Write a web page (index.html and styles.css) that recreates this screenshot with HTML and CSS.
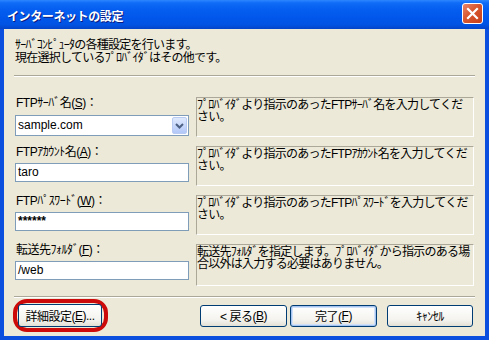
FILE: index.html
```html
<!DOCTYPE html>
<html lang="ja">
<head>
    <meta charset="UTF-8">
    <title>インターネットの設定</title>
    <link rel="stylesheet" href="styles.css">
</head>
<body>
    <div class="window">
        <!-- Title bar -->
        <div class="titlebar">
            <span class="title">インターネットの設定</span>
            <span class="close">
                <svg width="13" height="13" viewBox="0 0 13 13">
                    <path d="M2 2 L11 11 M11 2 L2 11" stroke="#fff" stroke-width="2.2" stroke-linecap="square"/>
                </svg>
            </span>
        </div>

        <div class="client">
            <p class="intro">ｻｰﾊﾞｺﾝﾋﾟｭｰﾀの各種設定を行います。<br>現在選択しているﾌﾟﾛﾊﾞｲﾀﾞはその他です。</p>
            <div class="sep"></div>

            <div class="fields">
                <div class="row">
                    <div class="field">
                        <div class="label">FTPｻｰﾊﾞ名(<u>S</u>)：</div>
                        <div class="combo">
                            <span class="value">sample.com</span>
                            <span class="drop">
                                <svg width="9" height="6" viewBox="0 0 9 6">
                                    <path d="M1 1 L4.5 4.5 L8 1" fill="none" stroke="#4d6185" stroke-width="2"/>
                                </svg>
                            </span>
                        </div>
                    </div>
                    <div class="desc">ﾌﾟﾛﾊﾞｲﾀﾞより指示のあったFTPｻｰﾊﾞ名を入力してください。</div>
                </div>

                <div class="row">
                    <div class="field">
                        <div class="label">FTPｱｶｳﾝﾄ名(<u>A</u>)：</div>
                        <div class="edit">taro</div>
                    </div>
                    <div class="desc">ﾌﾟﾛﾊﾞｲﾀﾞより指示のあったFTPｱｶｳﾝﾄ名を入力してください。</div>
                </div>

                <div class="row">
                    <div class="field">
                        <div class="label">FTPﾊﾟｽﾜｰﾄﾞ(<u>W</u>)：</div>
                        <div class="edit pass">******</div>
                    </div>
                    <div class="desc">ﾌﾟﾛﾊﾞｲﾀﾞより指示のあったFTPﾊﾟｽﾜｰﾄﾞを入力してください。</div>
                </div>

                <div class="row last">
                    <div class="field">
                        <div class="label">転送先ﾌｫﾙﾀﾞ(<u>F</u>)：</div>
                        <div class="edit">/web</div>
                    </div>
                    <div class="desc">転送先ﾌｫﾙﾀﾞを指定します。ﾌﾟﾛﾊﾞｲﾀﾞから指示のある場合以外は入力する必要はありません。</div>
                </div>
            </div>

            <div class="sep"></div>

            <div class="buttons">
                <span class="ring">
                    <span class="btn detail">詳細設定(<u>E</u>)...</span>
                </span>
                <span class="btn back">&lt; 戻る(<u>B</u>)</span>
                <span class="btn finish">完了(<u>F</u>)</span>
                <span class="btn cancel">ｷｬﾝｾﾙ</span>
            </div>
        </div>
    </div>
</body>
</html>
```

FILE: styles.css
```css
body {
    margin: 0;
    font-family: "Liberation Sans", "Noto Sans CJK JP", sans-serif;
    font-size: 12px;
    color: #000;
}

.window {
    width: 489px;
    height: 340px;
    box-sizing: border-box;
    display: flex;
    flex-direction: column;
    background: #0a4fdd;
    padding: 0 4px 4px 4px;
}

/* Title bar */
.titlebar {
    height: 29px;
    flex: none;
    margin: 0 -4px;
    padding: 0 6px 0 7px;
    display: flex;
    align-items: center;
    justify-content: space-between;
    background: linear-gradient(#2d86ff 0%, #0f6cf7 10%, #065ff0 30%, #0157eb 60%, #0153e3 85%, #0444c8 100%);
}

.title {
    color: #fff;
    font-weight: bold;
    font-size: 12px;
    letter-spacing: -0.4px;
    text-shadow: 1px 1px 0 #0a1a80;
    margin-top: 1px;
}

.close {
    width: 19px;
    height: 19px;
    display: flex;
    align-items: center;
    justify-content: center;
    border: 1px solid #fff;
    border-radius: 3px;
    background: linear-gradient(135deg, #e8856a 0%, #d8562e 45%, #c6401a 100%);
    margin-top: -3px;
}

/* Client area */
.client {
    flex: 1;
    background: #ece9d8;
    padding: 0 11px;
    display: flex;
    flex-direction: column;
}

.intro {
    margin: 10px 0 0 0;
    line-height: 13px;
    letter-spacing: -0.75px;
}

.sep {
    border-top: 1px solid #aca899;
    border-bottom: 1px solid #fff;
    margin: 10px -1px 0 -1px;
}

.fields {
    margin-top: 20px;
    display: flex;
    flex-direction: column;
    gap: 9px;
}

.row {
    display: flex;
    gap: 7px;
    height: 40px;
}

.row.last {
    height: 42px;
}

.field {
    width: 174px;
    flex: none;
}

.label {
    height: 17px;
    line-height: 13px;
    padding-left: 1px;
    letter-spacing: -0.5px;
}

.combo,
.edit {
    box-sizing: border-box;
    border: 1px solid #7f9db9;
    background: #fff;
    padding-left: 2px;
}

.combo {
    height: 21px;
    line-height: 19px;
    margin-top: 1px;
    display: flex;
    justify-content: space-between;
}

.edit {
    height: 19px;
    line-height: 17px;
}

.pass {
    font-weight: bold;
}

.drop {
    width: 15px;
    height: 17px;
    margin: 1px;
    box-sizing: border-box;
    border: 1px solid #b9cbf3;
    border-radius: 2px;
    background: linear-gradient(#dfe9fd, #c4d5fa 60%, #b3c8f7);
    display: flex;
    align-items: center;
    justify-content: center;
}

.desc {
    flex: 1;
    box-sizing: border-box;
    border-top: 1px solid #aca899;
    border-left: 1px solid #aca899;
    border-right: 1px solid #fff;
    border-bottom: 1px solid #fff;
    line-height: 12px;
    letter-spacing: -0.75px;
    padding: 1px 0 0 0;
}

/* Buttons */
.buttons {
    margin-top: 1px;
    display: flex;
    align-items: center;
    letter-spacing: -0.5px;
}

.ring {
    border: 4px solid #cc0a0a;
    border-radius: 14px;
    padding: 1px 2px 1px 1px;
    margin-left: -2px;
}

.btn {
    height: 22px;
    box-sizing: border-box;
    border: 1px solid #003c74;
    border-radius: 3px;
    background: linear-gradient(#ffffff, #f4f3ee 70%, #e3e0d5);
    display: flex;
    align-items: center;
    justify-content: center;
}

.ring .btn {
    width: 84px;
    height: 23px;
}

.back {
    width: 87px;
    margin-left: auto;
}

.finish {
    width: 87px;
    margin-left: 3px;
    box-shadow: inset 0 0 0 1px #a5c4ef, inset 0 0 0 2px #cfe0f8;
}

.cancel {
    width: 86px;
    margin-left: 10px;
    margin-right: 1px;
}
```
